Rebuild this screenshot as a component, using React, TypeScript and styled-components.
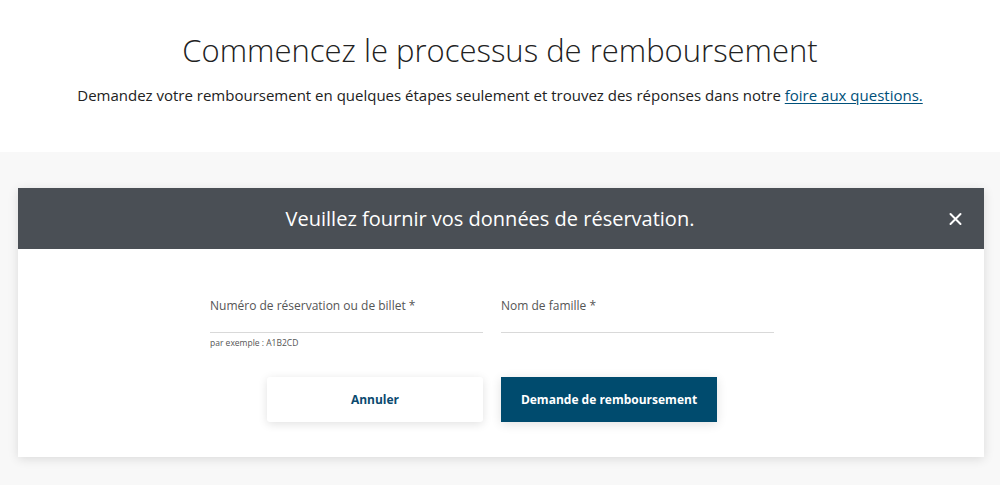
import styled, { createGlobalStyle } from "styled-components";

const GlobalStyle = createGlobalStyle`
  body {
    margin: 0;
    font-family: "Open Sans", "Liberation Sans", sans-serif;
    color: #222;
    background: #f8f8f8;
  }
`;

function App() {
    return (
        <>
            <GlobalStyle />
            <Intro>
                <Title>Commencez le processus de remboursement</Title>
                <Lead>
                    Demandez votre remboursement en quelques étapes seulement et trouvez des réponses dans notre{" "}
                    <FaqLink href="#">foire aux questions.</FaqLink>
                </Lead>
            </Intro>
            <Main>
                <Card>
                    <CardHeader>
                        <CardTitle>Veuillez fournir vos données de réservation.</CardTitle>
                        <CloseButton aria-label="Fermer">
                            <svg width="13" height="13" viewBox="0 0 13 13">
                                <path d="M1.5 1.5 L11.5 11.5 M11.5 1.5 L1.5 11.5" stroke="#fff" strokeWidth="2" strokeLinecap="round" />
                            </svg>
                        </CloseButton>
                    </CardHeader>
                    <CardBody>
                        <Fields>
                            <Field>
                                <Label>Numéro de réservation ou de billet *</Label>
                                <Input type="text" />
                                <Hint>par exemple : A1B2CD</Hint>
                            </Field>
                            <Field>
                                <Label>Nom de famille *</Label>
                                <Input type="text" />
                            </Field>
                        </Fields>
                        <Actions>
                            <Button $variant="secondary">Annuler</Button>
                            <Button $variant="primary">Demande de remboursement</Button>
                        </Actions>
                    </CardBody>
                </Card>
            </Main>
        </>
    );
}

const Intro = styled.header`
  background: #fff;
  text-align: center;
  padding: 30px 0 46px;
`;

const Title = styled.h1`
  margin: 0;
  font-size: 31px;
  font-weight: 300;
  line-height: 40px;
  color: #222;
`;

const Lead = styled.p`
  margin: 14px 0 0;
  font-size: 15px;
  line-height: 22px;
  color: #222;
`;

const FaqLink = styled.a`
  color: #00507a;
  text-decoration: underline;
  text-underline-offset: 2px;
`;

const Main = styled.main`
  padding: 36px 16px 28px 18px;
`;

const Card = styled.section`
  background: #fff;
  box-shadow: 0 2px 10px rgba(0, 0, 0, 0.12);
`;

const CardHeader = styled.div`
  position: relative;
  height: 61px;
  background: #4a4f55;
  display: flex;
  align-items: center;
  justify-content: center;
`;

const CardTitle = styled.h2`
  margin: 0;
  font-size: 20px;
  font-weight: 400;
  color: #fff;
  transform: translateX(-11px);
`;

const CloseButton = styled.button`
  position: absolute;
  right: 22px;
  top: 50%;
  transform: translateY(-50%);
  background: none;
  border: none;
  padding: 0;
  display: flex;
  cursor: pointer;
`;

const CardBody = styled.div`
  padding: 48px 18px 35px 0;
  display: flex;
  flex-direction: column;
  align-items: center;
`;

const Fields = styled.div`
  display: grid;
  grid-template-columns: 273px 273px;
  column-gap: 18px;
  height: 80px;
`;

const Field = styled.div`
  display: flex;
  flex-direction: column;
`;

const Label = styled.label`
  font-size: 12px;
  line-height: 18px;
  color: #555;
`;

const Input = styled.input`
  border: none;
  border-bottom: 1px solid #d9d9d9;
  outline: none;
  height: 17px;
  padding: 0;
  font-family: inherit;
  font-size: 13px;
`;

const Hint = styled.span`
  margin-top: 4px;
  font-size: 8.5px;
  color: #555;
`;

const Actions = styled.div`
  display: flex;
  gap: 18px;
`;

const Button = styled.button<{ $variant: "primary" | "secondary" }>`
  width: 216px;
  height: 45px;
  border: none;
  font-family: inherit;
  font-size: 12px;
  font-weight: 700;
  cursor: pointer;
  border-radius: ${(p) => (p.$variant === "primary" ? "0" : "3px")};
  background: ${(p) => (p.$variant === "primary" ? "#004b6e" : "#fff")};
  color: ${(p) => (p.$variant === "primary" ? "#fff" : "#0b4a6f")};
  box-shadow: 0 2px 10px rgba(0, 0, 0, 0.12);
`;

export default App;
